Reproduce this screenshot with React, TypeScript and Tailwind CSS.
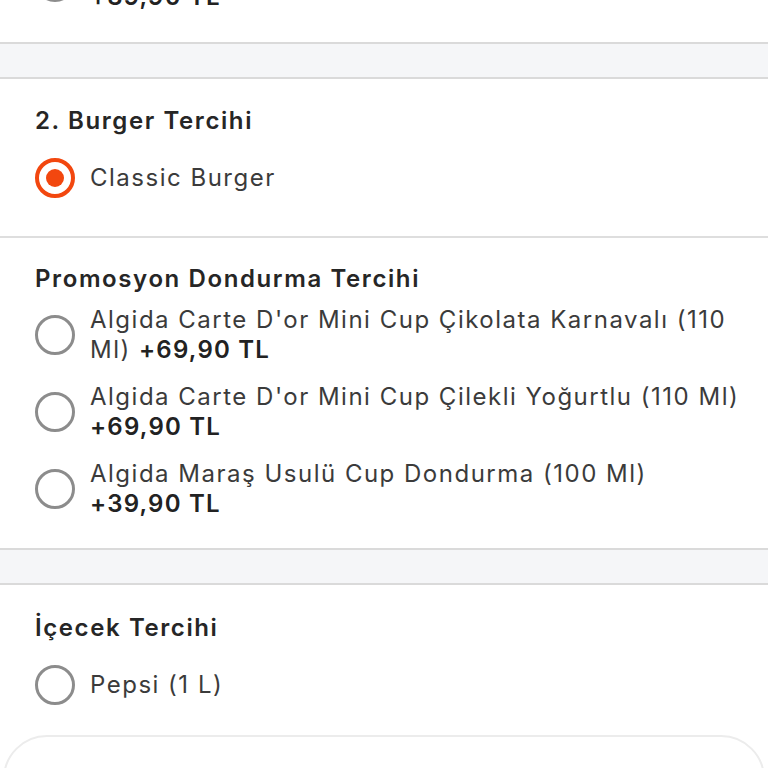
import React from 'react'

type Option = { name: string; price?: string }

const promoOptions: Option[] = [
  { name: "Algida Carte D'or Mini Cup Çikolata Karnavalı (110 Ml)", price: '+69,90 TL' },
  { name: "Algida Carte D'or Mini Cup Çilekli Yoğurtlu (110 Ml)", price: '+69,90 TL' },
  { name: 'Algida Maraş Usulü Cup Dondurma (100 Ml)', price: '+39,90 TL' }
]

function Radio({ checked }: { checked?: boolean }) {
  if (checked) {
    return (
      <span className="flex h-[40px] w-[40px] shrink-0 items-center justify-center rounded-full border-[4px] border-[#f2470f]">
        <span className="h-[18px] w-[18px] rounded-full bg-[#f2470f]" />
      </span>
    )
  }
  return <span className="h-[40px] w-[40px] shrink-0 rounded-full border-[3px] border-[#8c8c8c]" />
}

function OptionRow({ option, checked }: { option: Option; checked?: boolean }) {
  return (
    <label className="flex items-center gap-[15px]">
      <Radio checked={checked} />
      <span className="text-[24px] leading-[30px] tracking-[1.5px] text-[#3b3b3b]">
        {option.name}
        {option.price && (
          <>
            {' '}
            <span className="whitespace-nowrap font-semibold tracking-[1.2px] text-[#222]">{option.price}</span>
          </>
        )}
      </span>
    </label>
  )
}

function Heading({ children }: { children: React.ReactNode }) {
  return <h2 className="text-[24px] font-semibold leading-[30px] tracking-[1.6px] text-[#262626]">{children}</h2>
}

function GrayGap() {
  return <div className="h-[35px] border-b-2 border-[#dadada] bg-[#f5f6f8]" />
}

export default function App() {
  return (
    <div className="h-[768px] w-[768px] overflow-hidden bg-white font-['Inter',sans-serif]">
      {/* previous section, scrolled out of view */}
      <div className="flex h-[44px] flex-col justify-end overflow-hidden border-b-2 border-[#dadada] pl-[35px] pr-[14px]">
        <div className="shrink-0 pb-[30px]">
          <OptionRow option={promoOptions[2]} />
        </div>
      </div>
      <GrayGap />

      {/* 2. Burger Tercihi */}
      <section className="border-b-2 border-[#dedede] pb-[38px] pl-[35px] pr-[14px] pt-[27px]">
        <Heading>2. Burger Tercihi</Heading>
        <div className="mt-[22px]">
          <OptionRow option={{ name: 'Classic Burger' }} checked />
        </div>
      </section>

      {/* Promosyon */}
      <section className="border-b-2 border-[#dadada] pb-[29px] pl-[35px] pr-[14px] pt-[26px]">
        <Heading>Promosyon Dondurma Tercihi</Heading>
        <div className="mt-[11px] flex flex-col gap-[17px]">
          {promoOptions.map(o => (
            <OptionRow key={o.name} option={o} />
          ))}
        </div>
      </section>
      <GrayGap />

      {/* İçecek */}
      <section className="pb-[30px] pl-[35px] pr-[14px] pt-[28px]">
        <Heading>İçecek Tercihi</Heading>
        <div className="mt-[22px]">
          <OptionRow option={{ name: 'Pepsi (1 L)' }} />
        </div>
      </section>

      <div className="mx-[3px] h-[120px] rounded-t-[44px] border-2 border-[#ececec] bg-white" />
    </div>
  )
}
